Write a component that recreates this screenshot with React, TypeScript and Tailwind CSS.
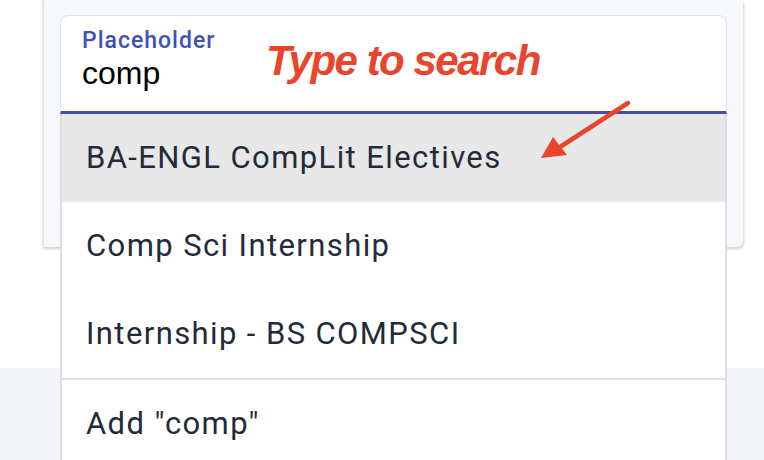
import React from "react";

const options = [
  { label: "BA-ENGL CompLit Electives", active: true },
  { label: "Comp Sci Internship", active: false },
  { label: "Internship - BS COMPSCI", active: false },
];

function Dropdown() {
  return (
    <div className="absolute left-[-1px] top-[calc(100%+3px)] z-10 w-[calc(100%+2px)] border-x-2 border-[#dedede] bg-white font-['Roboto',sans-serif] text-[31px] tracking-[1.4px] text-[#232b3a]">
      {options.map((o) => (
        <div
          key={o.label}
          className={`flex h-[88px] items-center px-[24px] ${o.active ? "bg-[#e8e8e8]" : ""}`}
        >
          {o.label}
        </div>
      ))}
      <div className="h-[2px] bg-[#e0e0e0]" />
      <div className="flex h-[88px] items-center px-[24px]">Add "comp"</div>
    </div>
  );
}

export default function App() {
  return (
    <div className="relative flex h-[460px] w-[764px] flex-col overflow-hidden bg-white">
      <div className="h-[368px] shrink-0">
        <div className="ml-[42px] h-[247px] w-[701px] rounded-br-md border-l-2 border-[#e6e7ec] bg-[#f7f8fc] pl-[16px] pt-[15px] shadow-[1px_2px_3px_rgba(0,0,0,0.18)]">
          <div className="relative h-[99px] w-[667px] rounded-t-lg border border-b-[3px] border-[#e1e5ee] border-b-[#4050b0] bg-white px-[21px] pt-[12px]">
            <div className="font-['Roboto',sans-serif] text-[23px] font-medium leading-[26px] tracking-[1px] text-[#3f51b5]">
              Placeholder
            </div>
            <div className="font-['Liberation_Sans',sans-serif] text-[32px] leading-[38px] text-black">
              comp
            </div>
            <Dropdown />
          </div>
        </div>
      </div>
      <div className="flex-1 bg-[#f4f5f9]" />

      <div className="absolute left-[266px] top-[33px] z-20 font-['Liberation_Sans',sans-serif] text-[42px] font-bold italic leading-[56px] tracking-[-1.5px] text-[#e8452c]">
        Type to search
      </div>
      <svg
        className="absolute left-[530px] top-[95px] z-20"
        width="110"
        height="75"
        viewBox="0 0 110 75"
      >
        <line x1="98" y1="8" x2="30" y2="52" stroke="#e8452c" strokeWidth="4.5" strokeLinecap="round" />
        <polygon points="11,63 23,42 37,60" fill="#e8452c" />
      </svg>
    </div>
  );
}
